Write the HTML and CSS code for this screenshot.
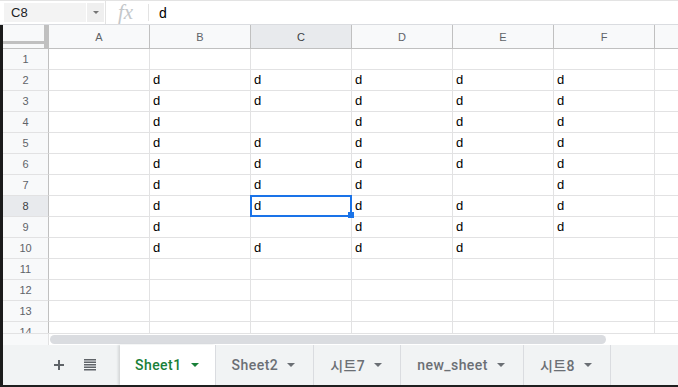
FILE: index.html
```html
<!DOCTYPE html>
<html lang="ko">
<head>
    <meta charset="UTF-8">
    <meta name="viewport" content="width=device-width, initial-scale=1.0">
    <title>Sheet</title>
    <link rel="stylesheet" href="styles.css">
</head>
<body>
    <div class="formula-bar">
        <div class="name-wrap">
            <div class="name-box">C8</div>
            <div class="name-drop"><span class="tri small"></span></div>
        </div>
        <div class="fx">fx</div>
        <div class="formula">d</div>
    </div>

    <div class="main">
        <div class="sheet">
            <div class="grid">
                <!--header-->
                <div class="corner"></div>
                <div class="ch">A</div><div class="ch">B</div><div class="ch on">C</div><div class="ch">D</div><div class="ch">E</div><div class="ch">F</div><div class="ch"></div>

                <div class="rh">1</div><div class="c"></div><div class="c"></div><div class="c"></div><div class="c"></div><div class="c"></div><div class="c"></div><div class="c"></div>
                <div class="rh">2</div><div class="c"></div><div class="c">d</div><div class="c">d</div><div class="c">d</div><div class="c">d</div><div class="c">d</div><div class="c"></div>
                <div class="rh">3</div><div class="c"></div><div class="c">d</div><div class="c">d</div><div class="c">d</div><div class="c">d</div><div class="c">d</div><div class="c"></div>
                <div class="rh">4</div><div class="c"></div><div class="c">d</div><div class="c"></div><div class="c">d</div><div class="c">d</div><div class="c">d</div><div class="c"></div>
                <div class="rh">5</div><div class="c"></div><div class="c">d</div><div class="c">d</div><div class="c">d</div><div class="c">d</div><div class="c">d</div><div class="c"></div>
                <div class="rh">6</div><div class="c"></div><div class="c">d</div><div class="c">d</div><div class="c">d</div><div class="c">d</div><div class="c">d</div><div class="c"></div>
                <div class="rh">7</div><div class="c"></div><div class="c">d</div><div class="c">d</div><div class="c">d</div><div class="c"></div><div class="c">d</div><div class="c"></div>
                <div class="rh on">8</div><div class="c"></div><div class="c">d</div><div class="c sel">d<span class="handle"></span></div><div class="c">d</div><div class="c">d</div><div class="c">d</div><div class="c"></div>
                <div class="rh">9</div><div class="c"></div><div class="c">d</div><div class="c"></div><div class="c">d</div><div class="c">d</div><div class="c">d</div><div class="c"></div>
                <div class="rh">10</div><div class="c"></div><div class="c">d</div><div class="c">d</div><div class="c">d</div><div class="c">d</div><div class="c"></div><div class="c"></div>
                <div class="rh">11</div><div class="c"></div><div class="c"></div><div class="c"></div><div class="c"></div><div class="c"></div><div class="c"></div><div class="c"></div>
                <div class="rh">12</div><div class="c"></div><div class="c"></div><div class="c"></div><div class="c"></div><div class="c"></div><div class="c"></div><div class="c"></div>
                <div class="rh">13</div><div class="c"></div><div class="c"></div><div class="c"></div><div class="c"></div><div class="c"></div><div class="c"></div><div class="c"></div>
                <div class="rh">14</div><div class="c"></div><div class="c"></div><div class="c"></div><div class="c"></div><div class="c"></div><div class="c"></div><div class="c"></div>
            </div>
        </div>

        <div class="hscroll">
            <div class="gutter"></div>
            <div class="thumb"></div>
        </div>

        <div class="tabs">
            <div class="tab-tools">
                <button class="tool">
                    <svg width="12" height="12" viewBox="0 0 12 12"><path d="M6 1v10M1 6h10" stroke="#5f6368" stroke-width="2"/></svg>
                </button>
                <button class="tool">
                    <svg width="12" height="12" viewBox="0 0 12 12"><path d="M0 .75h12M0 3.25h12M0 5.75h12M0 8.25h12M0 10.75h12" stroke="#5f6368" stroke-width="1.5"/></svg>
                </button>
            </div>
            <div class="tab active">Sheet1<span class="tri"></span></div>
            <div class="tab">Sheet2<span class="tri"></span></div>
            <div class="tab">시트7<span class="tri"></span></div>
            <div class="tab">new_sheet<span class="tri"></span></div>
            <div class="tab">시트8<span class="tri"></span></div>
        </div>
    </div>
    <div class="taskbar"></div>
</body>
</html>
```

FILE: styles.css
```css
*{
    margin: 0;
    padding: 0;
    box-sizing: border-box;
}
body{
    width: 678px;
    height: 387px;
    overflow: hidden;
    background: #fff;
    font-family: "Liberation Sans", Arial, sans-serif;
}

/* formula bar */
.formula-bar{
    height: 25px;
    border-top: 1px solid #e3e3e3;
    border-bottom: 1px solid #dadce0;
    display: flex;
    align-items: center;
}
.name-wrap{
    height: 23px;
    width: 106px;
    padding: 2px 1px 2px 4px;
    border-right: 1px solid #e3e3e3;
    display: flex;
    gap: 1px;
}
.name-box{
    width: 82px;
    background: #f3f3f3;
    color: #202124;
    font-size: 13px;
    line-height: 19px;
    padding-left: 7px;
}
.name-drop{
    flex: 1;
    background: #efefef;
    display: flex;
    align-items: center;
    justify-content: center;
}
.fx{
    width: 43px;
    height: 17px;
    padding-left: 12px;
    border-right: 1px solid #e3e3e3;
    font-family: "Liberation Serif", serif;
    font-style: italic;
    font-size: 21px;
    line-height: 17px;
    color: #c4c7ca;
}
.formula{
    padding-left: 10px;
    font-size: 14px;
    color: #000;
}

/* grid */
.main{
    border-left: 3px solid #1b1b1b;
    height: 360px;
}
.sheet{
    height: 308px;
    overflow: hidden;
}
.grid{
    display: grid;
    grid-template-columns: 46px repeat(7, 101px);
    grid-template-rows: 24px;
    grid-auto-rows: 21px;
    width: 753px;
}
.corner{
    background: #f8f9fa;
    border-right: 5px solid #c0c0c0;
    border-bottom: 1px solid #c0c0c0;
    box-shadow: inset 0 -4px 0 #f8f9fa, inset 0 -7px 0 #c0c0c0;
}
.ch, .rh{
    background: #f8f9fa;
    color: #5f6368;
    font-size: 11px;
    display: flex;
    align-items: center;
    justify-content: center;
}
.ch{
    border-right: 1px solid #c0c0c0;
    border-bottom: 1px solid #c0c0c0;
}
.rh{
    border-right: 1px solid #c0c0c0;
    border-bottom: 1px solid #e2e2e3;
}
.ch.on, .rh.on{
    background: #e8eaed;
    color: #3c4043;
}
.c{
    border-right: 1px solid #e2e2e3;
    border-bottom: 1px solid #e2e2e3;
    font-size: 13px;
    line-height: 20px;
    padding-left: 3px;
    color: #000;
}
.c.sel{
    position: relative;
}
.c.sel::after{
    content: "";
    position: absolute;
    inset: -1px;
    border: 2px solid #1a73e8;
}
.handle{
    position: absolute;
    right: -3px;
    bottom: -2px;
    width: 6px;
    height: 6px;
    background: #1a73e8;
    z-index: 1;
}

/* scrollbar */
.hscroll{
    height: 12px;
    border-top: 1px solid #e2e2e3;
    display: flex;
}
.gutter{
    width: 46px;
    background: #f8f9fa;
    border-right: 1px solid #e2e2e3;
}
.thumb{
    width: 556px;
    height: 9px;
    margin: 1px 0 0 1px;
    background: #dadce0;
    border-radius: 5px;
}

/* sheet tabs */
.tabs{
    height: 40px;
    background: #f1f3f4;
    display: flex;
}
.tab-tools{
    display: flex;
    align-items: center;
    gap: 3px;
    padding-left: 42px;
    width: 117px;
}
.tool{
    width: 28px;
    height: 28px;
    border: 0;
    background: none;
    display: flex;
    align-items: center;
    justify-content: center;
}
.tab{
    display: flex;
    align-items: center;
    gap: 9px;
    padding: 0 18px 0 16px;
    border-right: 1px solid #dadce0;
    font-family: Roboto, "Noto Sans CJK KR", sans-serif;
    font-weight: 500;
    font-size: 14px;
    letter-spacing: .45px;
    color: #6b6f74;
}
.tab.active{
    background: #fff;
    color: #188038;
    padding: 0 16px 0 15px;
    box-shadow: -2px 0 2px rgba(60,64,67,.15);
}
.tri{
    width: 0;
    height: 0;
    border-left: 4px solid transparent;
    border-right: 4px solid transparent;
    border-top: 4px solid #6b6f74;
}
.tri.small{
    border-width: 3px 3px 0;
    border-top-color: #757575;
}
.tab.active .tri{
    border-top-color: #188038;
}
.taskbar{
    height: 2px;
    background: #1f1f1f;
}
```
